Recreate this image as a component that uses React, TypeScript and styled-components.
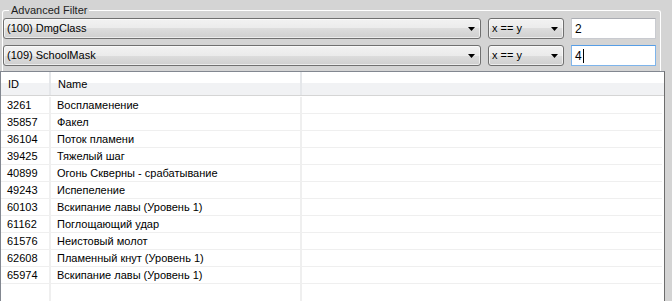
import React from "react";
import styled, { createGlobalStyle } from "styled-components";

const GlobalStyle = createGlobalStyle`
  html, body {
    margin: 0;
    padding: 0;
    background: #d4d4d4;
    font-family: "Liberation Sans", Arial, sans-serif;
    font-size: 11px;
    color: #000;
  }
`;

const Window = styled.div`
  width: 672px;
  height: 301px;
  overflow: hidden;
  display: flex;
  flex-direction: column;
`;

const GroupBox = styled.div`
  position: relative;
  margin: 10px 11px 0 2px;
  border: 1px solid #fff;
  border-bottom: none;
  border-radius: 3px 3px 0 0;
  padding: 7px 4px 5px 0;
  display: flex;
  flex-direction: column;
  gap: 6px;
`;

// the caption sits over the group box's top border
const Caption = styled.span`
  position: absolute;
  top: -8px;
  left: 6px;
  padding: 0 2px;
  background: #d4d4d4;
  line-height: 14px;
  color: #1e1e1e;
`;

const FilterRow = styled.div`
  display: flex;
  gap: 7px;
  height: 21px;
`;

const Combo = styled.div<{ $width?: number }>`
  ${(p) => (p.$width ? `width: ${p.$width}px; flex: none;` : "flex: 1;")}
  box-sizing: border-box;
  height: 21px;
  border: 1px solid #707070;
  border-radius: 3px;
  background: linear-gradient(#f2f2f2 0%, #ebebeb 50%, #dddddd 50%, #cfcfcf 100%);
  box-shadow: inset 0 0 0 1px rgba(255, 255, 255, 0.6);
  display: flex;
  align-items: center;
  padding: 0 5px 0 3px;
  line-height: 13px;
`;

const ComboText = styled.span`
  flex: 1;
  white-space: nowrap;
`;

const Arrow = () => (
  <svg width="7" height="4" viewBox="0 0 7 4">
    <polygon points="0,0 7,0 3.5,4" fill="#000" />
  </svg>
);

const TextBox = styled.div<{ $focused?: boolean }>`
  width: 85px;
  flex: none;
  box-sizing: border-box;
  height: 21px;
  background: #fff;
  border: 1px solid ${(p) => (p.$focused ? "#7eb4ea" : "#c9cbd0")};
  border-top-color: ${(p) => (p.$focused ? "#569de5" : "#abadb3")};
  display: flex;
  align-items: center;
  padding-left: 3px;
  font-size: 12px;
`;

const Caret = styled.span`
  display: inline-block;
  width: 1px;
  height: 14px;
  background: #000;
  margin-left: 1px;
`;

const ListView = styled.div`
  flex: 1;
  width: 665px;
  box-sizing: border-box;
  border: 1px solid #828790;
  border-right-color: #6d6d6d;
  border-bottom: none;
  background: #fff;
  display: flex;
  flex-direction: column;
`;

const HeaderRow = styled.div`
  display: grid;
  grid-template-columns: 50px 251px 1fr;
  height: 24px;
  box-sizing: border-box;
  border-bottom: 1px solid #d5d5d5;
  background: linear-gradient(#ffffff 0%, #ffffff 50%, #f1f2f4 50%, #f1f2f4 100%);
`;

const HeaderCell = styled.div<{ $last?: boolean }>`
  display: flex;
  align-items: center;
  padding-left: 7px;
  border-right: ${(p) => (p.$last ? "none" : "2px solid #e5e7ea")};
`;

const Body = styled.div`
  flex: 1;
  display: flex;
  flex-direction: column;
  padding-top: 1px;
`;

const Row = styled.div`
  display: grid;
  grid-template-columns: 50px 251px 1fr;
  height: 17px;
  box-sizing: border-box;
  border-bottom: 1px solid #efefef;
  margin-right: 2px;
`;

const Cell = styled.div<{ $last?: boolean }>`
  display: flex;
  align-items: center;
  padding-left: 6px;
  white-space: nowrap;
  border-right: ${(p) => (p.$last ? "none" : "2px solid #efefef")};
`;

const Filler = styled(Row)`
  flex: 1;
  border-bottom: none;
`;

const spells: [number, string][] = [
  [3261, "Воспламенение"],
  [35857, "Факел"],
  [36104, "Поток пламени"],
  [39425, "Тяжелый шаг"],
  [40899, "Огонь Скверны - срабатывание"],
  [49243, "Испепеление"],
  [60103, "Вскипание лавы (Уровень 1)"],
  [61162, "Поглощающий удар"],
  [61576, "Неистовый молот"],
  [62608, "Пламенный кнут (Уровень 1)"],
  [65974, "Вскипание лавы (Уровень 1)"],
];

const App: React.FC = () => {
  return (
    <Window>
      <GlobalStyle />
      <GroupBox>
        <Caption>Advanced Filter</Caption>
        <FilterRow>
          <Combo>
            <ComboText>(100) DmgClass</ComboText>
            <Arrow />
          </Combo>
          <Combo $width={76}>
            <ComboText>x == y</ComboText>
            <Arrow />
          </Combo>
          <TextBox>2</TextBox>
        </FilterRow>
        <FilterRow>
          <Combo>
            <ComboText>(109) SchoolMask</ComboText>
            <Arrow />
          </Combo>
          <Combo $width={76}>
            <ComboText>x == y</ComboText>
            <Arrow />
          </Combo>
          <TextBox $focused>
            4<Caret />
          </TextBox>
        </FilterRow>
      </GroupBox>

      <ListView>
        <HeaderRow>
          <HeaderCell>ID</HeaderCell>
          <HeaderCell>Name</HeaderCell>
          <HeaderCell $last />
        </HeaderRow>
        <Body>
          {spells.map(([id, name]) => (
            <Row key={id}>
              <Cell>{id}</Cell>
              <Cell>{name}</Cell>
              <Cell $last />
            </Row>
          ))}
          <Filler>
            <Cell />
            <Cell />
            <Cell $last />
          </Filler>
        </Body>
      </ListView>
    </Window>
  );
};

export default App;
